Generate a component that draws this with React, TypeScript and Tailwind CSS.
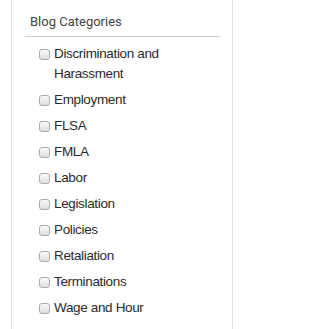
import React from "react";

const categories = [
  "Discrimination and Harassment",
  "Employment",
  "FLSA",
  "FMLA",
  "Labor",
  "Legislation",
  "Policies",
  "Retaliation",
  "Terminations",
  "Wage and Hour",
];

const CategoryItem = ({ label }: { label: string }) => {
  return (
    <li className="flex items-start gap-[4px]">
      <span className="mt-[5px] h-[11px] w-[11px] shrink-0 rounded-[3px] border border-[#acacac] bg-gradient-to-b from-[#fbfbfb] to-[#dedede]" />
      <span className="text-[13.5px] leading-[20px] tracking-[-0.35px] text-[#2a2a2a] font-['Liberation_Sans',Arial,sans-serif]">
        {label}
      </span>
    </li>
  );
};

export default function App() {
  return (
    <div className="h-[329px] w-[242px] overflow-hidden bg-white">
      <div className="ml-[11px] h-full w-[222px] border-x border-[#e3e3e3] pl-[13px] pr-[12px] pt-[13px]">
        <div className="border-b border-[#cccccc] pb-[5px] pl-[5px] text-[13px] leading-[18px] text-[#444] font-['Roboto',Arial,sans-serif]">
          Blog Categories
        </div>
        <ul className="mt-[7px] flex flex-col gap-[6px] pl-[14px] pr-[40px]">
          {categories.map((name, index) => {
            return <CategoryItem key={index} label={name} />;
          })}
        </ul>
      </div>
    </div>
  );
}
